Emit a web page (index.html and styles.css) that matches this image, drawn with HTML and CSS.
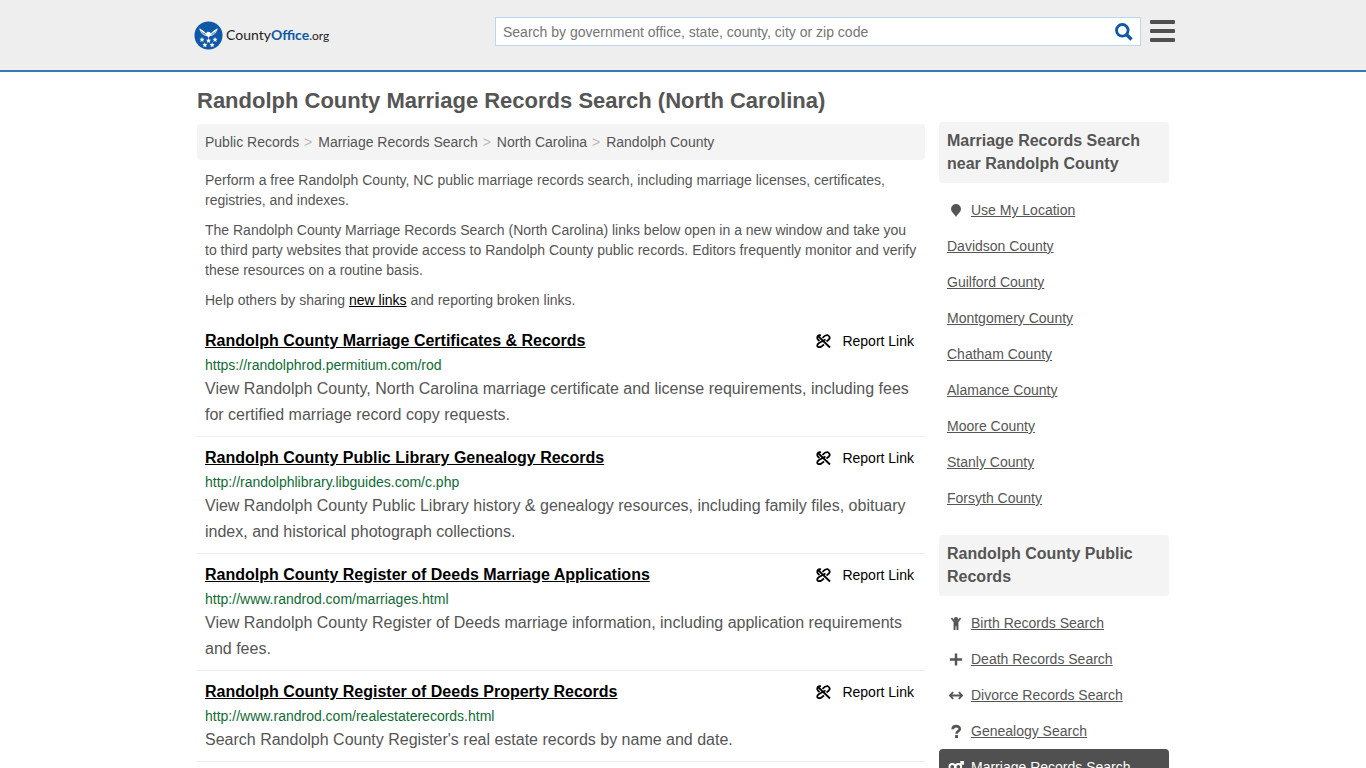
FILE: index.html
```html
<!DOCTYPE html>
<html lang="en">
<head>
    <meta charset="utf-8">
    <meta name="viewport" content="width=device-width, initial-scale=1.0">
    <title>Randolph County Marriage Records Search (North Carolina)</title>
    <link rel="stylesheet" href="styles.css">
</head>
<body>
    <svg class="sprite" aria-hidden="true">
        <symbol id="unlink" viewBox="0 0 16 16">
            <g fill="none" stroke="currentColor" stroke-width="1.800">
                <path d="M2.500 2.500L15 14.500"/>
                <path d="M7.500 4.800Q10.500 1.600 12.800 2.200Q15.300 3.400 14.500 5.700Q14 6.800 11.500 8.500"/>
                <path d="M10.500 6.500L4 10Q1.600 11.700 2.500 13.300Q4 14.900 6.300 13.600L9 11.500"/>
                <path d="M6 2.400Q2.300 1.600 2.200 5Q2.300 6.500 4.500 8"/>
            </g>
        </symbol>
        <symbol id="star" viewBox="0 0 10 10">
            <path fill="#fff" d="M5 0l1.300 3.400 3.700.2-2.900 2.300 1 3.600L5 7.500 1.900 9.500l1-3.600L0 3.600l3.700-.2z"/>
        </symbol>
    </svg>

    <header class="topbar">
        <div class="container topbar-inner">
            <a class="logo" href="#">
                <svg viewBox="0 0 30 30" aria-hidden="true">
                    <circle cx="15" cy="15" r="14.500" fill="#0f58a8"/>
                    <path fill="#fff" d="M5.500 7.500c2.500 1.500 5 2.800 7 5.500l1.300-2 2.400.3L17.500 13c2-2.700 4.500-4 7-5.500-.2 3.500-2.500 6-5.500 7.500l-2.500.5L15 17.500 13.500 15.500 11 15c-3-1.500-5.300-4-5.500-7.500z"/>
                    <path fill="none" stroke="#0f58a8" stroke-width=".6" d="M6.500 10.500l5 3M8.500 13l3.500 1M23.500 10.500l-5 3M21.500 13l-3.500 1"/>
                    <use href="#star" x="5.500" y="16.500" width="5.500" height="5.500"/>
                    <use href="#star" x="12.300" y="17.500" width="5.500" height="5.500"/>
                    <use href="#star" x="19" y="16.500" width="5.500" height="5.500"/>
                    <use href="#star" x="8.500" y="22" width="5.500" height="5.500"/>
                    <use href="#star" x="16" y="22" width="5.500" height="5.500"/>
                </svg>
                <span class="logo-text">County<b>Office</b><i>.org</i></span>
            </a>
            <form class="search">
                <input type="text" aria-label="Search" placeholder="Search by government office, state, county, city or zip code">
                <button type="button" aria-label="Search">
                    <svg viewBox="0 0 18 18" fill="none" stroke="currentColor">
                        <circle cx="7.300" cy="7.300" r="5.800" stroke-width="2.800"/>
                        <path d="M11.500 11.500L16.500 16.500" stroke-width="3.400"/>
                    </svg>
                </button>
            </form>
            <button class="menu" type="button" aria-label="Menu"><span></span><span></span><span></span></button>
        </div>
    </header>

    <div class="container page">
        <main>
            <h1>Randolph County Marriage Records Search (North Carolina)</h1>
            <nav class="breadcrumb">
                <a href="#">Public Records</a>
                <a href="#">Marriage Records Search</a>
                <a href="#">North Carolina</a>
                <a href="#">Randolph County</a>
            </nav>
            <div class="intro">
                <p>Perform a free Randolph County, NC public marriage records search, including marriage licenses, certificates, registries, and indexes.</p>
                <p>The Randolph County Marriage Records Search (North Carolina) links below open in a new window and take you to third party websites that provide access to Randolph County public records. Editors frequently monitor and verify these resources on a routine basis.</p>
                <p>Help others by sharing <a href="#">new links</a> and reporting broken links.</p>
            </div>
            <ul class="results">
                <li>
                    <div class="result-head">
                        <a class="title" href="#">Randolph County Marriage Certificates &amp; Records</a>
                        <a class="report" href="#"><svg><use href="#unlink"/></svg>Report Link</a>
                    </div>
                    <div class="url">https://randolphrod.permitium.com/rod</div>
                    <p>View Randolph County, North Carolina marriage certificate and license requirements, including fees for certified marriage record copy requests.</p>
                </li>
                <li>
                    <div class="result-head">
                        <a class="title" href="#">Randolph County Public Library Genealogy Records</a>
                        <a class="report" href="#"><svg><use href="#unlink"/></svg>Report Link</a>
                    </div>
                    <div class="url">http://randolphlibrary.libguides.com/c.php</div>
                    <p>View Randolph County Public Library history &amp; genealogy resources, including family files, obituary index, and historical photograph collections.</p>
                </li>
                <li>
                    <div class="result-head">
                        <a class="title" href="#">Randolph County Register of Deeds Marriage Applications</a>
                        <a class="report" href="#"><svg><use href="#unlink"/></svg>Report Link</a>
                    </div>
                    <div class="url">http://www.randrod.com/marriages.html</div>
                    <p>View Randolph County Register of Deeds marriage information, including application requirements and fees.</p>
                </li>
                <li>
                    <div class="result-head">
                        <a class="title" href="#">Randolph County Register of Deeds Property Records</a>
                        <a class="report" href="#"><svg><use href="#unlink"/></svg>Report Link</a>
                    </div>
                    <div class="url">http://www.randrod.com/realestaterecords.html</div>
                    <p>Search Randolph County Register's real estate records by name and date.</p>
                </li>
            </ul>
        </main>

        <aside>
            <h2>Marriage Records Search near Randolph County</h2>
            <ul class="side-list">
                <li><a href="#"><svg viewBox="0 0 16 16"><path d="M8 1a5.300 5.300 0 0 0-5.300 5.300C2.700 9.500 6 11 8 15c2-4 5.300-5.500 5.300-8.700A5.300 5.300 0 0 0 8 1z"/></svg><span>Use My Location</span></a></li>
                <li><a href="#"><span>Davidson County</span></a></li>
                <li><a href="#"><span>Guilford County</span></a></li>
                <li><a href="#"><span>Montgomery County</span></a></li>
                <li><a href="#"><span>Chatham County</span></a></li>
                <li><a href="#"><span>Alamance County</span></a></li>
                <li><a href="#"><span>Moore County</span></a></li>
                <li><a href="#"><span>Stanly County</span></a></li>
                <li><a href="#"><span>Forsyth County</span></a></li>
            </ul>
            <h2>Randolph County Public Records</h2>
            <ul class="side-list">
                <li><a href="#"><svg viewBox="0 0 16 16"><circle cx="8" cy="3.300" r="2.300"/><path d="M2.500 2.700l1.300-1.200L6.800 5h2.400l3-3.500 1.300 1.200-2.900 4V15H8.500v-4h-1v4H5.400V6.700z"/></svg><span>Birth Records Search</span></a></li>
                <li><a href="#"><svg viewBox="0 0 16 16"><path d="M6.700 1.500h2.600v5.200h5.200v2.600H9.300v5.200H6.700V9.300H1.500V6.700h5.200z"/></svg><span>Death Records Search</span></a></li>
                <li><a href="#"><svg viewBox="0 0 16 16"><path fill="none" stroke="currentColor" stroke-width="1.900" d="M2 8h12M5 4.300L1.500 8 5 11.700M11 4.300L14.500 8 11 11.700"/></svg><span>Divorce Records Search</span></a></li>
                <li><a href="#"><svg viewBox="0 0 16 16"><path d="M4.400 5.600C4.600 1.200 12 1.400 12 5.200c0 2.600-3.500 2.500-3.500 5.300" fill="none" stroke="currentColor" stroke-width="2.800"/><rect x="7" y="11.800" width="3.200" height="3.200"/></svg><span>Genealogy Search</span></a></li>
                <li><a class="active" href="#"><svg viewBox="0 0 16 16" fill="none" stroke="currentColor" stroke-width="2"><circle cx="4" cy="7.200" r="3"/><circle cx="10.500" cy="7.200" r="3"/><path d="M4 10v5M2 12.800h4M12.500 5L15 2.500M12.500 2H15.500v3"/></svg><span>Marriage Records Search</span></a></li>
            </ul>
        </aside>
    </div>
</body>
</html>
```
FILE: styles.css
```css
* {
    box-sizing: border-box;
}
body {
    margin: 0;
    font-family: "Liberation Sans", Arial, sans-serif;
    font-size: 14px;
    line-height: 20px;
    color: #555;
    background: #fff;
}
a {
    color: inherit;
}
ul {
    list-style: none;
    margin: 0;
    padding: 0;
}
.sprite {
    display: none;
}
.container {
    max-width: 988px;
    margin: 0 auto;
    padding: 0 8px;
}

/* header */
.topbar {
    background: #eee;
    border-bottom: 2px solid #337ab7;
}
.topbar-inner {
    display: flex;
    align-items: flex-start;
    height: 70px;
    padding: 17px 2px 0 5px;
}
.logo {
    display: flex;
    align-items: center;
    gap: 3px;
    height: 36px;
    text-decoration: none;
}
.logo svg {
    width: 29px;
    height: 29px;
}
.logo-text {
    font-family: Lato, sans-serif;
    font-size: 14px;
    color: #222;
}
.logo-text b {
    color: #0f58a8;
}
.logo-text i {
    font-style: normal;
    font-size: 12px;
}
.search {
    display: flex;
    width: 646px;
    height: 29px;
    margin-left: auto;
    border: 1px solid #bcd6ea;
    background: #fff;
}
.search input {
    flex: 1;
    min-width: 0;
    border: 0;
    padding: 0 7px;
    font: inherit;
    background: none;
}
.search input::placeholder {
    color: #757575;
}
.search button {
    display: flex;
    align-items: center;
    border: 0;
    padding: 0 7px;
    background: none;
    color: #0f58a8;
}
.search button svg {
    width: 18px;
    height: 18px;
}
.menu {
    display: flex;
    flex-direction: column;
    justify-content: space-between;
    width: 25px;
    height: 22px;
    margin: 3px 0 0 9px;
    border: 0;
    padding: 0;
    background: none;
}
.menu span {
    width: 100%;
    height: 4px;
    border-radius: 1px;
    background: #505050;
}

/* content */
.page {
    display: flex;
    gap: 14px;
}
main {
    flex: 1;
    min-width: 0;
}
h1 {
    margin: 16px 0 10px;
    font-size: 22px;
    line-height: 26px;
}
.breadcrumb {
    padding: 8px;
    border-radius: 4px;
    background: #f4f4f4;
}
.breadcrumb a {
    text-decoration: none;
}
.breadcrumb a + a::before {
    content: ">";
    padding-right: 6px;
    padding-left: 1px;
    color: #bbb;
}
.intro {
    padding: 10px 8px;
}
.intro p {
    margin: 0 0 10px;
}
.intro p:last-child {
    margin: 0;
}
.intro a {
    color: #000;
}
.results li {
    padding: 8px;
    border-bottom: 1px solid #eee;
}
.result-head {
    display: flex;
    justify-content: space-between;
    line-height: 26px;
    color: #000;
}
.title {
    font-size: 16px;
    font-weight: bold;
}
.report {
    display: flex;
    align-items: center;
    gap: 11px;
    margin-right: 3px;
    text-decoration: none;
}
.report svg {
    width: 16px;
    height: 16px;
}
.url {
    line-height: 22px;
    color: #0f6b33;
}
.results p {
    margin: 0;
    font-size: 16px;
    line-height: 26px;
}

/* sidebar */
aside {
    width: 230px;
    padding-top: 50px;
}
h2 {
    margin: 0 0 9px;
    padding: 7px 8px 8px;
    border-radius: 4px;
    background: #f4f4f4;
    font-size: 16px;
    line-height: 23px;
}
.side-list {
    margin-bottom: 19px;
}
.side-list a {
    display: flex;
    align-items: center;
    gap: 6px;
    height: 36px;
    padding: 0 8px;
    border-radius: 4px;
    text-decoration: none;
}
.side-list span {
    text-decoration: underline;
}
.side-list svg {
    width: 18px;
    height: 15px;
}
.side-list svg:not([fill]) {
    fill: currentColor;
}
.side-list .active {
    background: #505050;
    color: #fff;
}
.side-list .active span {
    text-decoration: none;
}
```
